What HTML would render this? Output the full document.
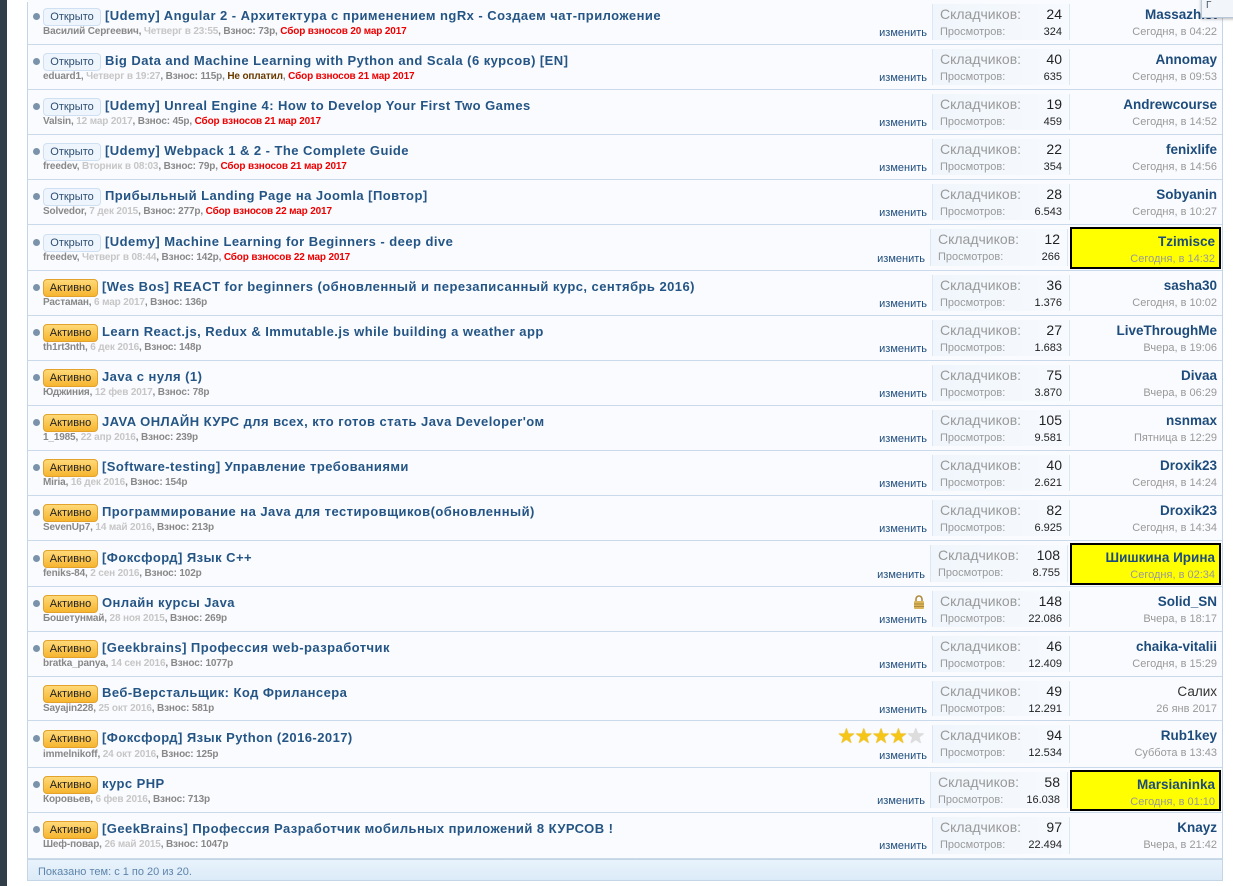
<!DOCTYPE html>
<html><head><meta charset="utf-8"><style>
*{margin:0;padding:0;box-sizing:border-box}
body{width:1233px;height:886px;background:#fff;font-family:"Liberation Sans",Arial,sans-serif;position:relative;overflow:hidden}
.strip{position:absolute;left:0;top:0;width:7px;height:886px;background:#2f3e48}
.wrap{position:absolute;left:27px;top:2px;width:1196px;height:879px;border:1px solid #c4d6e6;border-top:none;background:#fafbfe}
.row{position:absolute;left:28px;width:1194px;border-bottom:1px solid #cbdaea;background:#fafbfe}
.dot{position:absolute;left:5px;width:7px;height:7px;border-radius:50%;background:#7b93aa}
.pfx{position:absolute;height:18px;font-size:11px;line-height:16px;text-align:center;border-radius:4px}
.open{left:15px;width:58px;background:#eef5fd;border:1px solid #cfe0f2;color:#2d4e70}
.act{left:15px;width:55px;background:linear-gradient(#ffd978,#f6b530);border:1px solid #e2a22c;color:#222}
.title{position:absolute;font-size:13px;font-weight:bold;letter-spacing:0.45px;color:#245585;white-space:nowrap}
.meta{position:absolute;left:15px;font-size:10px;font-weight:bold;letter-spacing:-0.15px;color:#888;white-space:nowrap;top:auto}
.meta .d{color:#c6c6c6}
.meta .r{color:#e00}
.meta .n{color:#6a3a00}
.edit{position:absolute;right:295px;font-size:11px;color:#1d4c7c}
.stats{position:absolute;left:904px;width:138px;top:4px;bottom:4px;background:linear-gradient(90deg,#f0f6fc,#f7fafe);border-left:1px solid #dbe7f3;border-right:1px solid #dbe7f3}
.s1{position:absolute;left:7px;top:2px;font-size:14px;color:#999}
.n1{position:absolute;right:7px;top:2px;font-size:14px;color:#222}
.s2{position:absolute;left:7px;top:22px;font-size:11px;color:#999}
.n2{position:absolute;right:7px;top:22px;font-size:11px;color:#222}
.lp{position:absolute;left:1042px;width:152px;top:0;bottom:0}
.lp .u{position:absolute;right:5px;top:7px;font-size:13.5px;font-weight:bold;color:#1d4c7c;white-space:nowrap}
.lp .t{position:absolute;right:5px;top:26px;font-size:11px;color:#999;white-space:nowrap}
.hl{background:#ffff00;border:2px solid #000;top:2px;bottom:1px;left:1042px;width:151px}
.hl .u{right:4px;top:5px}.hl .t{right:4px;top:24px}
.foot{position:absolute;left:28px;top:859px;width:1194px;height:21px;background:linear-gradient(#e8f3fc,#dcebf8);border-top:1px solid #c4d6e6;font-size:11px;color:#5d84ab;padding:6px 10px}
.pop{position:absolute;left:1201px;top:-2px;width:40px;height:20px;background:#f2f6fa;border:1px solid #b8c8d8;box-shadow:0 1px 3px rgba(0,0,0,.3);font-size:10px;color:#456;padding:1px 0 0 4px}
</style></head><body>
<div class="strip"></div>
<div class="wrap"></div>

<div class="row" style="top:0;height:45px"><div class="dot" style="top:13px"></div><div class="pfx open" style="top:8px">Открыто</div><div class="title" style="left:77px;top:8px">[Udemy] Angular 2 - Архитектура с применением ngRx - Создаем чат-приложение</div><div class="meta" style="top:26px">Василий Сергеевич, <span class="d">Четверг в 23:55</span>, Взнос: 73р, <span class="r">Сбор взносов 20 мар 2017</span></div><div class="edit" style="top:27px">изменить</div><div class="stats"><span class="s1">Складчиков:</span><span class="n1">24</span><span class="s2">Просмотров:</span><span class="n2">324</span></div><div class="lp"><span class="u">Massazhist</span><span class="t">Сегодня, в 04:22</span></div></div>

<div class="row" style="top:45px;height:45px"><div class="dot" style="top:13px"></div><div class="pfx open" style="top:8px">Открыто</div><div class="title" style="left:77px;top:8px">Big Data and Machine Learning with Python and Scala (6 курсов) [EN]</div><div class="meta" style="top:26px">eduard1, <span class="d">Четверг в 19:27</span>, Взнос: 115р, <span class="n">Не оплатил</span>, <span class="r">Сбор взносов 21 мар 2017</span></div><div class="edit" style="top:27px">изменить</div><div class="stats"><span class="s1">Складчиков:</span><span class="n1">40</span><span class="s2">Просмотров:</span><span class="n2">635</span></div><div class="lp"><span class="u">Annomay</span><span class="t">Сегодня, в 09:53</span></div></div>

<div class="row" style="top:90px;height:45px"><div class="dot" style="top:13px"></div><div class="pfx open" style="top:8px">Открыто</div><div class="title" style="left:77px;top:8px">[Udemy] Unreal Engine 4: How to Develop Your First Two Games</div><div class="meta" style="top:26px">Valsin, <span class="d">12 мар 2017</span>, Взнос: 45р, <span class="r">Сбор взносов 21 мар 2017</span></div><div class="edit" style="top:27px">изменить</div><div class="stats"><span class="s1">Складчиков:</span><span class="n1">19</span><span class="s2">Просмотров:</span><span class="n2">459</span></div><div class="lp"><span class="u">Andrewcourse</span><span class="t">Сегодня, в 14:52</span></div></div>

<div class="row" style="top:135px;height:45px"><div class="dot" style="top:13px"></div><div class="pfx open" style="top:8px">Открыто</div><div class="title" style="left:77px;top:8px">[Udemy] Webpack 1 &amp; 2 - The Complete Guide</div><div class="meta" style="top:26px">freedev, <span class="d">Вторник в 08:03</span>, Взнос: 79р, <span class="r">Сбор взносов 21 мар 2017</span></div><div class="edit" style="top:27px">изменить</div><div class="stats"><span class="s1">Складчиков:</span><span class="n1">22</span><span class="s2">Просмотров:</span><span class="n2">354</span></div><div class="lp"><span class="u">fenixlife</span><span class="t">Сегодня, в 14:56</span></div></div>

<div class="row" style="top:180px;height:45px"><div class="dot" style="top:13px"></div><div class="pfx open" style="top:8px">Открыто</div><div class="title" style="left:77px;top:8px">Прибыльный Landing Page на Joomla [Повтор]</div><div class="meta" style="top:26px">Solvedor, <span class="d">7 дек 2015</span>, Взнос: 277р, <span class="r">Сбор взносов 22 мар 2017</span></div><div class="edit" style="top:27px">изменить</div><div class="stats"><span class="s1">Складчиков:</span><span class="n1">28</span><span class="s2">Просмотров:</span><span class="n2">6.543</span></div><div class="lp"><span class="u">Sobyanin</span><span class="t">Сегодня, в 10:27</span></div></div>

<div class="row" style="top:225px;height:46px"><div class="dot" style="top:14px"></div><div class="pfx open" style="top:9px">Открыто</div><div class="title" style="left:77px;top:9px">[Udemy] Machine Learning for Beginners - deep dive</div><div class="meta" style="top:27px">freedev, <span class="d">Четверг в 08:44</span>, Взнос: 142р, <span class="r">Сбор взносов 22 мар 2017</span></div><div class="edit" style="top:28px;right:297px">изменить</div><div class="stats" style="left:902px"><span class="s1">Складчиков:</span><span class="n1">12</span><span class="s2">Просмотров:</span><span class="n2">266</span></div><div class="lp hl"><span class="u">Tzimisce</span><span class="t">Сегодня, в 14:32</span></div></div>

<div class="row" style="top:271px;height:45px"><div class="dot" style="top:13px"></div><div class="pfx act" style="top:8px">Активно</div><div class="title" style="left:74px;top:8px">[Wes Bos] REACT for beginners (обновленный и перезаписанный курс, сентябрь 2016)</div><div class="meta" style="top:26px">Растаман, <span class="d">6 мар 2017</span>, Взнос: 136р</div><div class="edit" style="top:27px">изменить</div><div class="stats"><span class="s1">Складчиков:</span><span class="n1">36</span><span class="s2">Просмотров:</span><span class="n2">1.376</span></div><div class="lp"><span class="u">sasha30</span><span class="t">Сегодня, в 10:02</span></div></div>

<div class="row" style="top:316px;height:45px"><div class="dot" style="top:13px"></div><div class="pfx act" style="top:8px">Активно</div><div class="title" style="left:74px;top:8px">Learn React.js, Redux &amp; Immutable.js while building a weather app</div><div class="meta" style="top:26px">th1rt3nth, <span class="d">6 дек 2016</span>, Взнос: 148р</div><div class="edit" style="top:27px">изменить</div><div class="stats"><span class="s1">Складчиков:</span><span class="n1">27</span><span class="s2">Просмотров:</span><span class="n2">1.683</span></div><div class="lp"><span class="u">LiveThroughMe</span><span class="t">Вчера, в 19:06</span></div></div>

<div class="row" style="top:361px;height:45px"><div class="dot" style="top:13px"></div><div class="pfx act" style="top:8px">Активно</div><div class="title" style="left:74px;top:8px">Java с нуля (1)</div><div class="meta" style="top:26px">Юджиния, <span class="d">12 фев 2017</span>, Взнос: 78р</div><div class="edit" style="top:27px">изменить</div><div class="stats"><span class="s1">Складчиков:</span><span class="n1">75</span><span class="s2">Просмотров:</span><span class="n2">3.870</span></div><div class="lp"><span class="u">Divaa</span><span class="t">Вчера, в 06:29</span></div></div>

<div class="row" style="top:406px;height:45px"><div class="dot" style="top:13px"></div><div class="pfx act" style="top:8px">Активно</div><div class="title" style="left:74px;top:8px">JAVA ОНЛАЙН КУРС для всех, кто готов стать Java Developer'ом</div><div class="meta" style="top:26px">1_1985, <span class="d">22 апр 2016</span>, Взнос: 239р</div><div class="edit" style="top:27px">изменить</div><div class="stats"><span class="s1">Складчиков:</span><span class="n1">105</span><span class="s2">Просмотров:</span><span class="n2">9.581</span></div><div class="lp"><span class="u">nsnmax</span><span class="t">Пятница в 12:29</span></div></div>

<div class="row" style="top:451px;height:45px"><div class="dot" style="top:13px"></div><div class="pfx act" style="top:8px">Активно</div><div class="title" style="left:74px;top:8px">[Software-testing] Управление требованиями</div><div class="meta" style="top:26px">Miria, <span class="d">16 дек 2016</span>, Взнос: 154р</div><div class="edit" style="top:27px">изменить</div><div class="stats"><span class="s1">Складчиков:</span><span class="n1">40</span><span class="s2">Просмотров:</span><span class="n2">2.621</span></div><div class="lp"><span class="u">Droxik23</span><span class="t">Сегодня, в 14:24</span></div></div>

<div class="row" style="top:496px;height:45px"><div class="dot" style="top:13px"></div><div class="pfx act" style="top:8px">Активно</div><div class="title" style="left:74px;top:8px">Программирование на Java для тестировщиков(обновленный)</div><div class="meta" style="top:26px">SevenUp7, <span class="d">14 май 2016</span>, Взнос: 213р</div><div class="edit" style="top:27px">изменить</div><div class="stats"><span class="s1">Складчиков:</span><span class="n1">82</span><span class="s2">Просмотров:</span><span class="n2">6.925</span></div><div class="lp"><span class="u">Droxik23</span><span class="t">Сегодня, в 14:34</span></div></div>

<div class="row" style="top:541px;height:46px"><div class="dot" style="top:14px"></div><div class="pfx act" style="top:9px">Активно</div><div class="title" style="left:74px;top:9px">[Фоксфорд] Язык C++</div><div class="meta" style="top:27px">feniks-84, <span class="d">2 сен 2016</span>, Взнос: 102р</div><div class="edit" style="top:28px;right:297px">изменить</div><div class="stats" style="left:902px"><span class="s1">Складчиков:</span><span class="n1">108</span><span class="s2">Просмотров:</span><span class="n2">8.755</span></div><div class="lp hl"><span class="u">Шишкина Ирина</span><span class="t">Сегодня, в 02:34</span></div></div>

<div class="row" style="top:587px;height:45px"><div class="dot" style="top:13px"></div><div class="pfx act" style="top:8px">Активно</div><div class="title" style="left:74px;top:8px">Онлайн курсы Java</div><div class="meta" style="top:26px">Бошетунмай, <span class="d">28 ноя 2015</span>, Взнос: 269р</div><svg style="position:absolute;left:885px;top:8px" width="12" height="14" viewBox="0 0 12 14"><path d="M3 7V4a3 3 0 0 1 6 0v3" fill="none" stroke="#b08a3a" stroke-width="1.6"/><rect x="1" y="6" width="10" height="8" rx="1" fill="#d9b45a"/><path d="M1 9h10M1 11.5h10" stroke="#b08a3a"/></svg><div class="edit" style="top:27px">изменить</div><div class="stats"><span class="s1">Складчиков:</span><span class="n1">148</span><span class="s2">Просмотров:</span><span class="n2">22.086</span></div><div class="lp"><span class="u">Solid_SN</span><span class="t">Вчера, в 18:17</span></div></div>

<div class="row" style="top:632px;height:45px"><div class="dot" style="top:13px"></div><div class="pfx act" style="top:8px">Активно</div><div class="title" style="left:74px;top:8px">[Geekbrains] Профессия web-разработчик</div><div class="meta" style="top:26px">bratka_panya, <span class="d">14 сен 2016</span>, Взнос: 1077р</div><div class="edit" style="top:27px">изменить</div><div class="stats"><span class="s1">Складчиков:</span><span class="n1">46</span><span class="s2">Просмотров:</span><span class="n2">12.409</span></div><div class="lp"><span class="u">chaika-vitalii</span><span class="t">Сегодня, в 15:29</span></div></div>

<div class="row" style="top:677px;height:44px"><div class="pfx act" style="top:8px">Активно</div><div class="title" style="left:74px;top:8px">Веб-Верстальщик: Код Фрилансера</div><div class="meta" style="top:26px">Sayajin228, <span class="d">25 окт 2016</span>, Взнос: 581р</div><div class="edit" style="top:27px">изменить</div><div class="stats"><span class="s1">Складчиков:</span><span class="n1">49</span><span class="s2">Просмотров:</span><span class="n2">12.291</span></div><div class="lp"><span class="u" style="font-weight:normal;color:#333">Салих</span><span class="t">26 янв 2017</span></div></div>

<div class="row" style="top:721px;height:47px"><div class="dot" style="top:14px"></div><div class="pfx act" style="top:9px">Активно</div><div class="title" style="left:74px;top:9px">[Фоксфорд] Язык Python (2016-2017)</div><div class="meta" style="top:28px">immelnikoff, <span class="d">24 окт 2016</span>, Взнос: 125р</div><div class="edit" style="top:29px">изменить</div><span style="position:absolute;left:809px;top:3px;font-size:21px;letter-spacing:-1.5px;color:#f5c518;text-shadow:0 0 1px #c9a000">★★★★<span style="color:#ddd;text-shadow:0 0 1px #aaa">★</span></span><div class="stats"><span class="s1">Складчиков:</span><span class="n1">94</span><span class="s2">Просмотров:</span><span class="n2">12.534</span></div><div class="lp"><span class="u">Rub1key</span><span class="t">Суббота в 13:43</span></div></div>

<div class="row" style="top:768px;height:45px"><div class="dot" style="top:13px"></div><div class="pfx act" style="top:8px">Активно</div><div class="title" style="left:74px;top:8px">курс PHP</div><div class="meta" style="top:26px">Коровьев, <span class="d">6 фев 2016</span>, Взнос: 713р</div><div class="edit" style="top:27px;right:297px">изменить</div><div class="stats" style="left:902px"><span class="s1">Складчиков:</span><span class="n1">58</span><span class="s2">Просмотров:</span><span class="n2">16.038</span></div><div class="lp hl"><span class="u">Marsianinka</span><span class="t">Сегодня, в 01:10</span></div></div>

<div class="row" style="top:813px;height:46px"><div class="dot" style="top:13px"></div><div class="pfx act" style="top:8px">Активно</div><div class="title" style="left:74px;top:8px">[GeekBrains] Профессия Разработчик мобильных приложений 8 КУРСОВ !</div><div class="meta" style="top:26px">Шеф-повар, <span class="d">26 май 2015</span>, Взнос: 1047р</div><div class="edit" style="top:27px">изменить</div><div class="stats"><span class="s1">Складчиков:</span><span class="n1">97</span><span class="s2">Просмотров:</span><span class="n2">22.494</span></div><div class="lp"><span class="u">Knayz</span><span class="t">Вчера, в 21:42</span></div></div>

<div class="foot">Показано тем: с 1 по 20 из 20.</div>
<div class="pop">Г</div>
</body></html>
